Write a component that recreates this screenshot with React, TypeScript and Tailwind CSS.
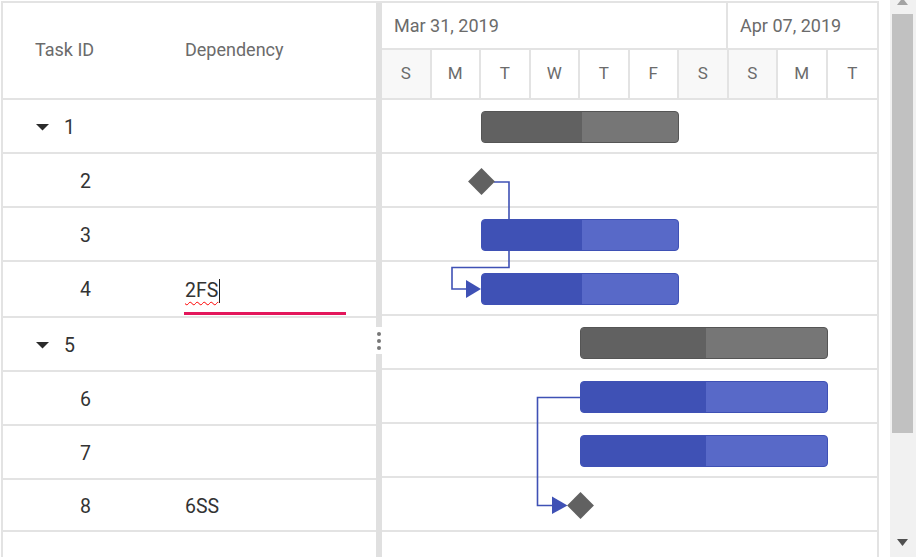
import React from "react";

type Row = { id: string; caret?: boolean; dep?: string; edit?: boolean; h: number };

const rows: Row[] = [
  { id: "1", caret: true, h: 54 },
  { id: "2", h: 54 },
  { id: "3", h: 54 },
  { id: "4", dep: "2FS", edit: true, h: 56 },
  { id: "5", caret: true, h: 54 },
  { id: "6", h: 54 },
  { id: "7", h: 54 },
  { id: "8", dep: "6SS", h: 52 },
];

const days = [
  { d: "S", we: true },
  { d: "M" },
  { d: "T" },
  { d: "W" },
  { d: "T" },
  { d: "F" },
  { d: "S", we: true },
  { d: "S", we: true },
  { d: "M" },
  { d: "T" },
];

function Caret() {
  return (
    <svg width="13" height="7" viewBox="0 0 13 7" className="mr-[15px] shrink-0">
      <path d="M0 0 H13 L6.5 6.5 Z" fill="#2b2b2b" />
    </svg>
  );
}

function Bar({
  left,
  top,
  width,
  progress,
  parent,
}: {
  left: number;
  top: number;
  width: number;
  progress: number;
  parent?: boolean;
}) {
  return (
    <div
      className={
        parent
          ? "absolute flex h-[32px] overflow-hidden rounded-[4px] border border-[#555555] bg-[#767676]"
          : "absolute flex h-[32px] overflow-hidden rounded-[4px] border border-[#3f51b5] bg-[#5869c8]"
      }
      style={{ left, top, width }}
    >
      <div
        className={parent ? "h-full bg-[#616161]" : "h-full bg-[#3f51b5]"}
        style={{ width: progress }}
      />
    </div>
  );
}

function Milestone({ cx, cy }: { cx: number; cy: number }) {
  return (
    <div
      className="absolute h-[19px] w-[19px] rotate-45 bg-[#616161]"
      style={{ left: cx - 9.5, top: cy - 9.5 }}
    />
  );
}

export default function App() {
  return (
    <div className="flex h-[557px] w-[916px] overflow-hidden bg-white font-['Roboto',sans-serif]">
      <div className="w-[890px] shrink-0 pl-[1px] pt-[1px]">
        <div className="flex h-[600px] w-[878px] border-2 border-b-0 border-[#e3e3e3]">
          {/* Left grid */}
          <div className="flex w-[373px] shrink-0 flex-col">
            <div className="flex h-[97px] shrink-0 items-center border-b-2 border-[#e3e3e3] pb-[3px] text-[18px] text-[#6b6b6b]">
              <div className="w-[161px] pl-[32px]">Task ID</div>
              <div className="pl-[21px]">Dependency</div>
            </div>
            {rows.map((r) => (
              <div
                key={r.id}
                className={
                  r.edit
                    ? "flex shrink-0 items-stretch border-b-2 border-[#e3e3e3] text-[19.5px] text-[#333333]"
                    : "flex shrink-0 items-center border-b-2 border-[#e3e3e3] pt-[3px] text-[19.5px] text-[#333333]"
                }
                style={{ height: r.h }}
              >
                <div
                  className={
                    (r.caret ? "pl-[33px] " : "pl-[77px] ") +
                    (r.edit ? "pt-[1px] " : "") +
                    "flex w-[161px] items-center"
                  }
                >
                  {r.caret && <Caret />}
                  <span>{r.id}</span>
                </div>
                <div className={r.edit ? "flex flex-1 flex-col justify-end pb-[1px] pl-[20px] pr-[30px]" : "flex-1 pl-[21px] pr-[30px]"}>
                  {r.edit ? (
                    <div className="flex h-[40px] items-start border-b-[3px] border-[#e3165b] pl-[1px] pt-[1px]">
                      <span className="text-[#333333] underline decoration-[#ff0000] decoration-wavy decoration-1 underline-offset-[4px]">
                        {r.dep}
                      </span>
                      <span className="ml-[1px] mt-[3px] h-[24px] w-[1px] bg-[#222222]" />
                    </div>
                  ) : (
                    <span>{r.dep}</span>
                  )}
                </div>
              </div>
            ))}
            <div className="flex-1" />
          </div>

          {/* Splitter */}
          <div className="relative w-[6px] shrink-0 bg-[#e0e0e0]">
            <div className="absolute left-0 top-[324px] flex h-[27px] w-[6px] flex-col items-center justify-center gap-[3px] bg-white">
              <div className="h-[4px] w-[4px] rounded-full bg-[#777777]" />
              <div className="h-[4px] w-[4px] rounded-full bg-[#777777]" />
              <div className="h-[4px] w-[4px] rounded-full bg-[#777777]" />
            </div>
          </div>

          {/* Chart */}
          <div className="flex w-[495px] shrink-0 flex-col">
            <div className="grid h-[47px] shrink-0 grid-cols-[346px_149px] border-b-2 border-[#e3e3e3] text-[18px] text-[#6b6b6b]">
              <div className="flex items-center border-r-2 border-[#e3e3e3] pl-[12px]">Mar 31, 2019</div>
              <div className="flex items-center pl-[12px]">Apr 07, 2019</div>
            </div>
            <div className="grid h-[50px] shrink-0 grid-cols-10 border-b-2 border-[#e3e3e3] text-[17px] text-[#6b6b6b]">
              {days.map((d, i) => (
                <div
                  key={i}
                  className={
                    (d.we ? "bg-[#f8f8f8] " : "bg-white ") +
                    (i < 9 ? "border-r-2 border-[#e3e3e3] " : "") +
                    "flex items-center justify-center"
                  }
                >
                  {d.d}
                </div>
              ))}
            </div>
            <div className="relative flex-1">
              {rows.map((r) => (
                <div key={r.id} className="h-[54px] border-b-2 border-[#e3e3e3]" />
              ))}
              <svg className="absolute left-0 top-0" width="495" height="460" viewBox="0 0 495 460">
                <path
                  d="M112 82 H127 V167.5 H70 V189 H85"
                  fill="none"
                  stroke="#3f51b5"
                  strokeWidth="1.6"
                />
                <path d="M84 180 L99 189 L84 198 Z" fill="#3f51b5" />
                <path
                  d="M198 297.5 H155.5 V405.5 H171"
                  fill="none"
                  stroke="#3f51b5"
                  strokeWidth="1.6"
                />
                <path d="M170 396.5 L185.5 405.5 L170 414 Z" fill="#3f51b5" />
              </svg>
              <Bar left={99} top={11} width={198} progress={100} parent />
              <Milestone cx={99.5} cy={81} />
              <Bar left={99} top={119} width={198} progress={100} />
              <Bar left={99} top={173} width={198} progress={100} />
              <Bar left={198} top={227} width={248} progress={125} parent />
              <Bar left={198} top={281} width={248} progress={125} />
              <Bar left={198} top={335} width={248} progress={125} />
              <Milestone cx={198.7} cy={405.5} />
            </div>
          </div>
        </div>
      </div>

      {/* Scrollbar */}
      <div className="relative h-full w-[26px] shrink-0 bg-[#f1f1f1]">
        <svg className="absolute left-[7px] top-[-2px]" width="11" height="7" viewBox="0 0 11 7">
          <path d="M0 7 L5.5 0 L11 7 Z" fill="#a3a3a3" />
        </svg>
        <div className="absolute left-[2px] top-[14px] h-[419px] w-[21px] bg-[#c1c1c1]" />
        <svg className="absolute left-[7px] top-[539px]" width="11" height="7" viewBox="0 0 11 7">
          <path d="M0 0 H11 L5.5 7 Z" fill="#505050" />
        </svg>
      </div>
    </div>
  );
}
